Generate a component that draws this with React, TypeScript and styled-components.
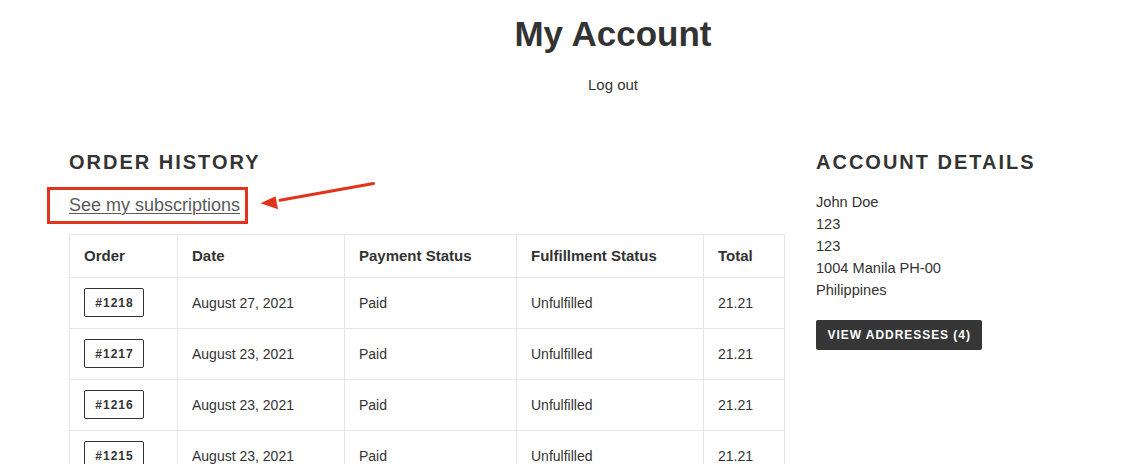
import React from "react";
import styled, { createGlobalStyle } from "styled-components";

const GlobalStyle = createGlobalStyle`
  html, body {
    margin: 0;
    padding: 0;
    background: #ffffff;
  }
  body {
    font-family: "Liberation Sans", Arial, Helvetica, sans-serif;
    color: #333333;
  }
  * { box-sizing: border-box; }
`;

const Page = styled.div`
  width: 1121px;
  padding-bottom: 40px;
`;

const Header = styled.header`
  padding-left: 105px;
  text-align: center;
`;

const Title = styled.h1`
  margin: 13px 0 0;
  font-size: 35px;
  line-height: 42px;
  font-weight: 700;
  color: #333333;
`;

const LogoutLink = styled.a`
  display: block;
  margin-top: 18.5px;
  font-size: 15px;
  line-height: 22px;
  color: #333333;
  text-decoration: none;
`;

const Main = styled.main`
  display: grid;
  grid-template-columns: 716px 1fr;
  column-gap: 31px;
  padding-left: 69px;
  margin-top: 54.7px;
`;

const Column = styled.section`
  display: flex;
  flex-direction: column;
  align-items: flex-start;
`;

const SectionTitle = styled.h2`
  margin: 0;
  font-size: 20px;
  line-height: 24px;
  font-weight: 700;
  letter-spacing: 2px;
  text-transform: uppercase;
  color: #333333;
`;

const LinkWrap = styled.div`
  position: relative;
  margin-top: 19.3px;
  margin-bottom: 16.3px;
`;

const SubLink = styled.a`
  display: block;
  font-size: 18px;
  line-height: 24px;
  color: #5a5a5a;
  text-decoration: underline;
  text-underline-offset: 2px;
  text-decoration-thickness: 1px;
`;

const HighlightBox = styled.span`
  position: absolute;
  left: -22px;
  top: -6.7px;
  width: 201px;
  height: 37px;
  border: 3px solid #e2331d;
  pointer-events: none;
`;

const ArrowSvg = styled.svg`
  position: absolute;
  left: 189px;
  top: -13.7px;
  overflow: visible;
  pointer-events: none;
`;

const Table = styled.div`
  display: grid;
  grid-template-columns: 108px 167px 172px 187px 81px;
  border-top: 1px solid #e6e6e6;
  border-left: 1px solid #e6e6e6;
`;

const HeadCell = styled.div`
  padding: 11px 14px;
  font-size: 15px;
  line-height: 20px;
  font-weight: 700;
  color: #333333;
  border-right: 1px solid #e6e6e6;
  border-bottom: 1px solid #e6e6e6;
`;

const Cell = styled.div`
  height: 51px;
  display: flex;
  align-items: center;
  padding: 0 14px;
  font-size: 14px;
  line-height: 20px;
  color: #333333;
  border-right: 1px solid #e6e6e6;
  border-bottom: 1px solid #e6e6e6;
`;

const OrderBadge = styled.a`
  display: inline-flex;
  align-items: center;
  justify-content: center;
  width: 60px;
  height: 29px;
  border: 1px solid #333333;
  border-radius: 2px;
  font-size: 12px;
  font-weight: 700;
  letter-spacing: 1px;
  color: #333333;
  text-decoration: none;
  padding-left: 1px;
`;

const Details = styled.address`
  margin-top: 17.3px;
  font-style: normal;
  font-size: 14.6px;
  line-height: 22px;
  color: #333333;
`;

const DarkButton = styled.a`
  display: inline-flex;
  align-items: center;
  height: 30px;
  margin-top: 18.3px;
  padding: 0 11px 0 11.5px;
  background: #363636;
  border-radius: 2px;
  font-size: 12px;
  font-weight: 700;
  letter-spacing: 0.95px;
  color: #ffffff;
  text-transform: uppercase;
  text-decoration: none;
`;

type Order = { id: string; date: string; payment: string; fulfillment: string; total: string };

const orders: Order[] = [
  { id: "#1218", date: "August 27, 2021", payment: "Paid", fulfillment: "Unfulfilled", total: "21.21" },
  { id: "#1217", date: "August 23, 2021", payment: "Paid", fulfillment: "Unfulfilled", total: "21.21" },
  { id: "#1216", date: "August 23, 2021", payment: "Paid", fulfillment: "Unfulfilled", total: "21.21" },
  { id: "#1215", date: "August 23, 2021", payment: "Paid", fulfillment: "Unfulfilled", total: "21.21" },
];

const headers = ["Order", "Date", "Payment Status", "Fulfillment Status", "Total"];

export default function App() {
  return (
    <Page>
      <GlobalStyle />
      <Header>
        <Title>My Account</Title>
        <LogoutLink href="#">Log out</LogoutLink>
      </Header>
      <Main>
        <Column>
          <SectionTitle>Order History</SectionTitle>
          <LinkWrap>
            <SubLink href="#">See my subscriptions</SubLink>
            <HighlightBox />
            <ArrowSvg width="118" height="32" viewBox="0 0 118 32">
              <line x1="115.5" y1="3.5" x2="22" y2="20.3" stroke="#e2331d" strokeWidth="3" strokeLinecap="round" />
              <polygon points="2.5,23.3 17.5,16.3 20,29.3" fill="#e2331d" />
            </ArrowSvg>
          </LinkWrap>
          <Table>
            {headers.map((h) => (
              <HeadCell key={h}>{h}</HeadCell>
            ))}
            {orders.map((o) => (
              <React.Fragment key={o.id}>
                <Cell>
                  <OrderBadge href="#">{o.id}</OrderBadge>
                </Cell>
                <Cell>{o.date}</Cell>
                <Cell>{o.payment}</Cell>
                <Cell>{o.fulfillment}</Cell>
                <Cell>{o.total}</Cell>
              </React.Fragment>
            ))}
          </Table>
        </Column>
        <Column>
          <SectionTitle>Account Details</SectionTitle>
          <Details>
            John Doe
            <br />
            123
            <br />
            123
            <br />
            1004 Manila PH-00
            <br />
            Philippines
          </Details>
          <DarkButton href="#">View Addresses (4)</DarkButton>
        </Column>
      </Main>
    </Page>
  );
}
